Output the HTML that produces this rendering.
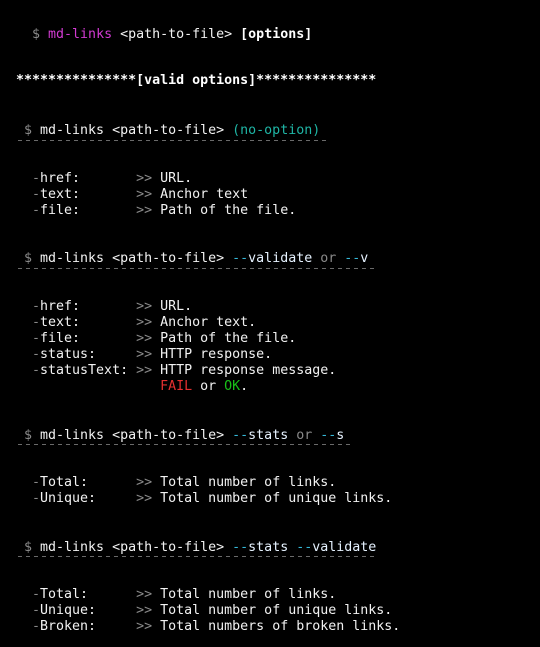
<!DOCTYPE html>
<html><head><meta charset="utf-8"><style>
html,body{margin:0;padding:0;background:#000;width:540px;height:647px;overflow:hidden}
body{position:relative;font-family:"DejaVu Sans Mono","Liberation Mono",monospace;font-size:13.3px;color:#f2f2f2}
.l{position:absolute;white-space:pre;line-height:16px;height:16px;margin-top:2px}
.g{color:#8a8a8a}.m{color:#d23bd2}.b{font-weight:bold;color:#fff}
.t{color:#1fb6a6}.c{color:#35b8d8}.v{color:#e6f2ff}.r{color:#e23030}.k{color:#18c018}
.d{position:absolute;height:1px;left:18px;background:repeating-linear-gradient(90deg,#6a6a6a 0 4px,transparent 4px 8px)}
</style></head><body>
<div class="l" style="left:32px;top:25px"><span class="g">$</span> <span class="m">md-links</span> &lt;path-to-file&gt; <span class="b">[options]</span></div>
<div class="l" style="left:16px;top:71px"><span class="b">***************[valid options]***************</span></div>

<div class="l" style="left:24px;top:121px"><span class="g">$</span> md-links &lt;path-to-file&gt; <span class="t">(no-option)</span></div>
<div class="d" style="top:140px;width:308px"></div>
<div class="l" style="left:32px;top:169px"><span class="g">-</span>href:       <span class="g">&gt;&gt;</span> URL.</div>
<div class="l" style="left:32px;top:185px"><span class="g">-</span>text:       <span class="g">&gt;&gt;</span> Anchor text</div>
<div class="l" style="left:32px;top:201px"><span class="g">-</span>file:       <span class="g">&gt;&gt;</span> Path of the file.</div>

<div class="l" style="left:24px;top:249px"><span class="g">$</span> md-links &lt;path-to-file&gt; <span class="c">--</span><span class="v">validate</span> <span class="g">or</span> <span class="c">--</span><span class="v">v</span></div>
<div class="d" style="top:268px;width:357px"></div>
<div class="l" style="left:32px;top:297px"><span class="g">-</span>href:       <span class="g">&gt;&gt;</span> URL.</div>
<div class="l" style="left:32px;top:313px"><span class="g">-</span>text:       <span class="g">&gt;&gt;</span> Anchor text.</div>
<div class="l" style="left:32px;top:329px"><span class="g">-</span>file:       <span class="g">&gt;&gt;</span> Path of the file.</div>
<div class="l" style="left:32px;top:345px"><span class="g">-</span>status:     <span class="g">&gt;&gt;</span> HTTP response.</div>
<div class="l" style="left:32px;top:361px"><span class="g">-</span>statusText: <span class="g">&gt;&gt;</span> HTTP response message.</div>
<div class="l" style="left:32px;top:377px">                <span class="r">FAIL</span> or <span class="k">OK</span>.</div>

<div class="l" style="left:24px;top:426px"><span class="g">$</span> md-links &lt;path-to-file&gt; <span class="c">--</span><span class="v">stats</span> <span class="g">or</span> <span class="c">--</span><span class="v">s</span></div>
<div class="d" style="top:444px;width:332px"></div>
<div class="l" style="left:32px;top:473px"><span class="g">-</span>Total:      <span class="g">&gt;&gt;</span> Total number of links.</div>
<div class="l" style="left:32px;top:489px"><span class="g">-</span>Unique:     <span class="g">&gt;&gt;</span> Total number of unique links.</div>

<div class="l" style="left:24px;top:538px"><span class="g">$</span> md-links &lt;path-to-file&gt; <span class="c">--</span><span class="v">stats</span> <span class="c">--</span><span class="v">validate</span></div>
<div class="d" style="top:556px;width:358px"></div>
<div class="l" style="left:32px;top:585px"><span class="g">-</span>Total:      <span class="g">&gt;&gt;</span> Total number of links.</div>
<div class="l" style="left:32px;top:601px"><span class="g">-</span>Unique:     <span class="g">&gt;&gt;</span> Total number of unique links.</div>
<div class="l" style="left:32px;top:617px"><span class="g">-</span>Broken:     <span class="g">&gt;&gt;</span> Total numbers of broken links.</div>
</body></html>
